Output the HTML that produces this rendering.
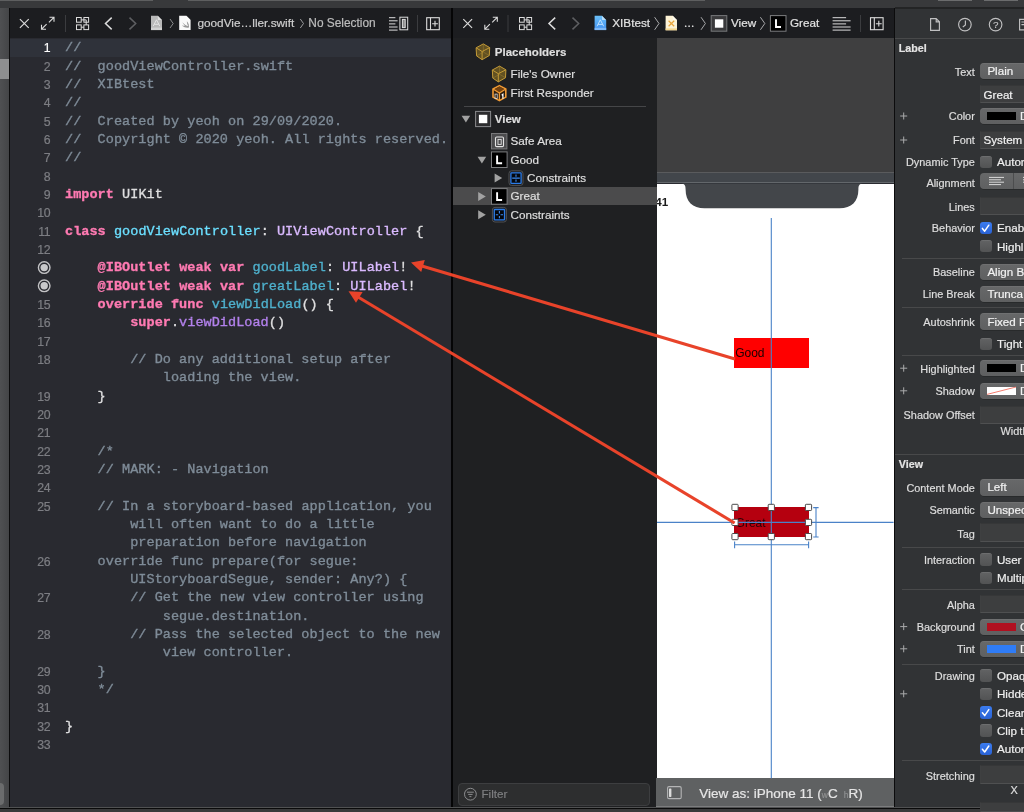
<!DOCTYPE html>
<html lang="en">
<head>
<meta charset="utf-8">
<title>XIBtest — goodViewController.swift</title>
<style>
html,body{margin:0;padding:0;background:#292a30;}
body{width:1024px;height:812px;overflow:hidden;position:relative;font-family:"Liberation Sans", sans-serif;}
#app{position:absolute;left:0;top:0;width:1024px;height:812px;overflow:hidden;background:#292a30;will-change:transform;}
#app div{position:absolute;box-sizing:border-box;}
.t{position:absolute;white-space:pre;-webkit-text-stroke:0.2px;}
svg.ov{position:absolute;left:0;top:0;width:1024px;height:812px;overflow:hidden;pointer-events:none;}
.m{font-family:"Liberation Mono", monospace;-webkit-text-stroke:0.35px;}
.k{color:#ff7ab2;font-weight:700;}
.c{color:#7f8c98;}
.d{color:#6bdfff;}
.o{color:#4eb0cc;}
.p{color:#dabaff;}
.f{color:#b281eb;}
</style>
</head>
<body>
<div id="app">
<div style="left:0px;top:0px;width:1024px;height:8px;background:#38393b;"></div>
<div style="left:0px;top:0px;width:153px;height:1px;background:#5e5f60;"></div>
<div style="left:188px;top:0px;width:516.5px;height:1px;background:#5e5f60;"></div>
<div style="left:938px;top:0px;width:34px;height:1px;background:#6b6c6d;"></div>
<div style="left:984px;top:0px;width:34px;height:1px;background:#6b6c6d;"></div>
<div style="left:0px;top:8px;width:9px;height:799px;background:linear-gradient(90deg,#4f5052,#444547);"></div>
<div style="left:0px;top:59px;width:9px;height:20px;background:#8e8f90;"></div>
<div style="left:-6px;top:782.5px;width:10px;height:22.5px;background:#6b6c6d;border-radius:4px;"></div>
<div style="left:9px;top:8px;width:1.2px;height:799px;background:#0c0c0d;"></div>
<div style="left:10px;top:8px;width:440.5px;height:30px;background:#1c1d20;"></div>
<div style="left:10px;top:38px;width:440.5px;height:769px;background:#292a30;"></div>
<div style="left:10px;top:38.5px;width:440.5px;height:18px;background:#2f323a;"></div>
<div style="left:450.5px;top:8px;width:2.5px;height:799px;background:#050506;"></div>
<div style="left:453px;top:8px;width:441px;height:30px;background:#1c1d20;"></div>
<div style="left:453px;top:38px;width:204px;height:769px;background:#1f2022;"></div>
<div style="left:657px;top:38px;width:237px;height:134px;background:#3f3f40;"></div>
<div style="left:657px;top:171.5px;width:237px;height:1px;background:#5a5b5d;"></div>
<div style="left:657px;top:172.5px;width:237px;height:10px;background:#42464b;"></div>
<div style="left:657px;top:182.3px;width:237px;height:1.2px;background:#63676b;"></div>
<div style="left:657px;top:183.5px;width:237px;height:595px;background:#ffffff;"></div>
<div style="left:656.4px;top:778.3px;width:237.6px;height:29px;background:#5f6162;"></div>
<div style="left:893.6px;top:8px;width:1.6px;height:799px;background:#0c0c0d;"></div>
<div style="left:895px;top:8px;width:129px;height:799px;background:#313335;"></div>
<div style="left:895px;top:38px;width:129px;height:1px;background:#48494a;"></div>
<div style="left:895px;top:7.4px;width:129px;height:1.2px;background:#232425;"></div>
<div style="left:0px;top:806.6px;width:1024px;height:1px;background:#505152;"></div>
<div style="left:0px;top:807.5px;width:1024px;height:1.7px;background:#0a0a0a;"></div>
<div style="left:0px;top:809.2px;width:1024px;height:3px;background:#3a3a3b;"></div>
<div style="left:656.4px;top:806.4px;width:237.6px;height:1.1px;background:#7c7d7e;"></div>
<span class="t" style="top:16px;font-size:11.8px;line-height:15px;color:#cfcfcf;left:197.4px;">goodVie…ller.swift</span>
<span class="t" style="top:16px;font-size:11.9px;line-height:15px;color:#bcbcbc;left:308.3px;">No Selection</span>
<span class="t" style="top:15px;font-size:11.7px;line-height:15px;color:#e2e2e2;left:612.3px;">XIBtest</span>
<span class="t" style="top:15px;font-size:11.7px;line-height:15px;color:#e2e2e2;letter-spacing:0.3px;left:684px;">...</span>
<span class="t" style="top:15px;font-size:11.7px;line-height:15px;color:#e2e2e2;left:731px;">View</span>
<span class="t" style="top:15px;font-size:11.7px;line-height:15px;color:#e2e2e2;left:790px;">Great</span>
<span class="t" style="top:40px;font-size:12.3px;line-height:16px;color:#ffffff;letter-spacing:-0.35px;right:973.7px;text-align:right;">1</span>
<span class="t m" style="top:39px;font-size:13.5px;line-height:18px;color:#dfdfe0;letter-spacing:0.05px;left:65.0px;"><span class="c">//</span></span>
<span class="t" style="top:59px;font-size:12.3px;line-height:16px;color:#7d7e83;letter-spacing:-0.35px;right:973.7px;text-align:right;">2</span>
<span class="t m" style="top:58px;font-size:13.5px;line-height:18px;color:#dfdfe0;letter-spacing:0.05px;left:65.0px;"><span class="c">//  goodViewController.swift</span></span>
<span class="t" style="top:77px;font-size:12.3px;line-height:16px;color:#7d7e83;letter-spacing:-0.35px;right:973.7px;text-align:right;">3</span>
<span class="t m" style="top:76px;font-size:13.5px;line-height:18px;color:#dfdfe0;letter-spacing:0.05px;left:65.0px;"><span class="c">//  XIBtest</span></span>
<span class="t" style="top:95px;font-size:12.3px;line-height:16px;color:#7d7e83;letter-spacing:-0.35px;right:973.7px;text-align:right;">4</span>
<span class="t m" style="top:94px;font-size:13.5px;line-height:18px;color:#dfdfe0;letter-spacing:0.05px;left:65.0px;"><span class="c">//</span></span>
<span class="t" style="top:114px;font-size:12.3px;line-height:16px;color:#7d7e83;letter-spacing:-0.35px;right:973.7px;text-align:right;">5</span>
<span class="t m" style="top:113px;font-size:13.5px;line-height:18px;color:#dfdfe0;letter-spacing:0.05px;left:65.0px;"><span class="c">//  Created by yeoh on 29/09/2020.</span></span>
<span class="t" style="top:132px;font-size:12.3px;line-height:16px;color:#7d7e83;letter-spacing:-0.35px;right:973.7px;text-align:right;">6</span>
<span class="t m" style="top:131px;font-size:13.5px;line-height:18px;color:#dfdfe0;letter-spacing:0.05px;left:65.0px;"><span class="c">//  Copyright © 2020 yeoh. All rights reserved.</span></span>
<span class="t" style="top:150px;font-size:12.3px;line-height:16px;color:#7d7e83;letter-spacing:-0.35px;right:973.7px;text-align:right;">7</span>
<span class="t m" style="top:149px;font-size:13.5px;line-height:18px;color:#dfdfe0;letter-spacing:0.05px;left:65.0px;"><span class="c">//</span></span>
<span class="t" style="top:169px;font-size:12.3px;line-height:16px;color:#7d7e83;letter-spacing:-0.35px;right:973.7px;text-align:right;">8</span>
<span class="t" style="top:187px;font-size:12.3px;line-height:16px;color:#7d7e83;letter-spacing:-0.35px;right:973.7px;text-align:right;">9</span>
<span class="t m" style="top:186px;font-size:13.5px;line-height:18px;color:#dfdfe0;letter-spacing:0.05px;left:65.0px;"><span class="k">import</span> UIKit</span>
<span class="t" style="top:205px;font-size:12.3px;line-height:16px;color:#7d7e83;letter-spacing:-0.35px;right:973.7px;text-align:right;">10</span>
<span class="t" style="top:224px;font-size:12.3px;line-height:16px;color:#7d7e83;letter-spacing:-0.35px;right:973.7px;text-align:right;">11</span>
<span class="t m" style="top:223px;font-size:13.5px;line-height:18px;color:#dfdfe0;letter-spacing:0.05px;left:65.0px;"><span class="k">class</span> <span class="d">goodViewController</span>: <span class="p">UIViewController</span> {</span>
<span class="t" style="top:242px;font-size:12.3px;line-height:16px;color:#7d7e83;letter-spacing:-0.35px;right:973.7px;text-align:right;">12</span>
<span class="t m" style="top:259px;font-size:13.5px;line-height:18px;color:#dfdfe0;letter-spacing:0.05px;left:97.6px;"><span class="k">@IBOutlet</span> <span class="k">weak</span> <span class="k">var</span> <span class="o">goodLabel</span>: <span class="p">UILabel</span>!</span>
<span class="t m" style="top:278px;font-size:13.5px;line-height:18px;color:#dfdfe0;letter-spacing:0.05px;left:97.6px;"><span class="k">@IBOutlet</span> <span class="k">weak</span> <span class="k">var</span> <span class="o">greatLabel</span>: <span class="p">UILabel</span>!</span>
<span class="t" style="top:297px;font-size:12.3px;line-height:16px;color:#7d7e83;letter-spacing:-0.35px;right:973.7px;text-align:right;">15</span>
<span class="t m" style="top:296px;font-size:13.5px;line-height:18px;color:#dfdfe0;letter-spacing:0.05px;left:97.6px;"><span class="k">override</span> <span class="k">func</span> <span class="o">viewDidLoad</span>() {</span>
<span class="t" style="top:315px;font-size:12.3px;line-height:16px;color:#7d7e83;letter-spacing:-0.35px;right:973.7px;text-align:right;">16</span>
<span class="t m" style="top:314px;font-size:13.5px;line-height:18px;color:#dfdfe0;letter-spacing:0.05px;left:130.2px;"><span class="k">super</span>.<span class="f">viewDidLoad</span>()</span>
<span class="t" style="top:334px;font-size:12.3px;line-height:16px;color:#7d7e83;letter-spacing:-0.35px;right:973.7px;text-align:right;">17</span>
<span class="t" style="top:352px;font-size:12.3px;line-height:16px;color:#7d7e83;letter-spacing:-0.35px;right:973.7px;text-align:right;">18</span>
<span class="t m" style="top:351px;font-size:13.5px;line-height:18px;color:#dfdfe0;letter-spacing:0.05px;left:130.2px;"><span class="c">// Do any additional setup after</span></span>
<span class="t m" style="top:369px;font-size:13.5px;line-height:18px;color:#dfdfe0;letter-spacing:0.05px;left:162.8px;"><span class="c">loading the view.</span></span>
<span class="t" style="top:389px;font-size:12.3px;line-height:16px;color:#7d7e83;letter-spacing:-0.35px;right:973.7px;text-align:right;">19</span>
<span class="t m" style="top:388px;font-size:13.5px;line-height:18px;color:#dfdfe0;letter-spacing:0.05px;left:97.6px;">}</span>
<span class="t" style="top:407px;font-size:12.3px;line-height:16px;color:#7d7e83;letter-spacing:-0.35px;right:973.7px;text-align:right;">20</span>
<span class="t" style="top:425px;font-size:12.3px;line-height:16px;color:#7d7e83;letter-spacing:-0.35px;right:973.7px;text-align:right;">21</span>
<span class="t" style="top:444px;font-size:12.3px;line-height:16px;color:#7d7e83;letter-spacing:-0.35px;right:973.7px;text-align:right;">22</span>
<span class="t m" style="top:443px;font-size:13.5px;line-height:18px;color:#dfdfe0;letter-spacing:0.05px;left:97.6px;"><span class="c">/*</span></span>
<span class="t" style="top:462px;font-size:12.3px;line-height:16px;color:#7d7e83;letter-spacing:-0.35px;right:973.7px;text-align:right;">23</span>
<span class="t m" style="top:461px;font-size:13.5px;line-height:18px;color:#dfdfe0;letter-spacing:0.05px;left:97.6px;"><span class="c">// MARK: - Navigation</span></span>
<span class="t" style="top:480px;font-size:12.3px;line-height:16px;color:#7d7e83;letter-spacing:-0.35px;right:973.7px;text-align:right;">24</span>
<span class="t" style="top:499px;font-size:12.3px;line-height:16px;color:#7d7e83;letter-spacing:-0.35px;right:973.7px;text-align:right;">25</span>
<span class="t m" style="top:498px;font-size:13.5px;line-height:18px;color:#dfdfe0;letter-spacing:0.05px;left:97.6px;"><span class="c">// In a storyboard-based application, you</span></span>
<span class="t m" style="top:516px;font-size:13.5px;line-height:18px;color:#dfdfe0;letter-spacing:0.05px;left:130.2px;"><span class="c">will often want to do a little</span></span>
<span class="t m" style="top:534px;font-size:13.5px;line-height:18px;color:#dfdfe0;letter-spacing:0.05px;left:130.2px;"><span class="c">preparation before navigation</span></span>
<span class="t" style="top:554px;font-size:12.3px;line-height:16px;color:#7d7e83;letter-spacing:-0.35px;right:973.7px;text-align:right;">26</span>
<span class="t m" style="top:553px;font-size:13.5px;line-height:18px;color:#dfdfe0;letter-spacing:0.05px;left:97.6px;"><span class="c">override func prepare(for segue:</span></span>
<span class="t m" style="top:571px;font-size:13.5px;line-height:18px;color:#dfdfe0;letter-spacing:0.05px;left:130.2px;"><span class="c">UIStoryboardSegue, sender: Any?) {</span></span>
<span class="t" style="top:590px;font-size:12.3px;line-height:16px;color:#7d7e83;letter-spacing:-0.35px;right:973.7px;text-align:right;">27</span>
<span class="t m" style="top:589px;font-size:13.5px;line-height:18px;color:#dfdfe0;letter-spacing:0.05px;left:130.2px;"><span class="c">// Get the new view controller using</span></span>
<span class="t m" style="top:608px;font-size:13.5px;line-height:18px;color:#dfdfe0;letter-spacing:0.05px;left:162.8px;"><span class="c">segue.destination.</span></span>
<span class="t" style="top:627px;font-size:12.3px;line-height:16px;color:#7d7e83;letter-spacing:-0.35px;right:973.7px;text-align:right;">28</span>
<span class="t m" style="top:626px;font-size:13.5px;line-height:18px;color:#dfdfe0;letter-spacing:0.05px;left:130.2px;"><span class="c">// Pass the selected object to the new</span></span>
<span class="t m" style="top:644px;font-size:13.5px;line-height:18px;color:#dfdfe0;letter-spacing:0.05px;left:162.8px;"><span class="c">view controller.</span></span>
<span class="t" style="top:664px;font-size:12.3px;line-height:16px;color:#7d7e83;letter-spacing:-0.35px;right:973.7px;text-align:right;">29</span>
<span class="t m" style="top:663px;font-size:13.5px;line-height:18px;color:#dfdfe0;letter-spacing:0.05px;left:97.6px;"><span class="c">}</span></span>
<span class="t" style="top:682px;font-size:12.3px;line-height:16px;color:#7d7e83;letter-spacing:-0.35px;right:973.7px;text-align:right;">30</span>
<span class="t m" style="top:681px;font-size:13.5px;line-height:18px;color:#dfdfe0;letter-spacing:0.05px;left:97.6px;"><span class="c">*/</span></span>
<span class="t" style="top:700px;font-size:12.3px;line-height:16px;color:#7d7e83;letter-spacing:-0.35px;right:973.7px;text-align:right;">31</span>
<span class="t" style="top:719px;font-size:12.3px;line-height:16px;color:#7d7e83;letter-spacing:-0.35px;right:973.7px;text-align:right;">32</span>
<span class="t m" style="top:718px;font-size:13.5px;line-height:18px;color:#dfdfe0;letter-spacing:0.05px;left:65.0px;">}</span>
<span class="t" style="top:737px;font-size:12.3px;line-height:16px;color:#7d7e83;letter-spacing:-0.35px;right:973.7px;text-align:right;">33</span>
<div style="left:453px;top:187.4px;width:204px;height:18.1px;background:#4b4b4c;"></div>
<div style="left:464px;top:106.2px;width:182px;height:1px;background:#454648;"></div>
<span class="t" style="top:45px;font-size:11.5px;line-height:15px;color:#dfdfdf;font-weight:700;left:494.8px;">Placeholders</span>
<span class="t" style="top:66px;font-size:11.7px;line-height:15px;color:#dfdfdf;left:510.5px;">File&#x27;s Owner</span>
<span class="t" style="top:85px;font-size:11.7px;line-height:15px;color:#dfdfdf;left:510.5px;">First Responder</span>
<span class="t" style="top:112px;font-size:11.5px;line-height:15px;color:#dfdfdf;font-weight:700;left:494.8px;">View</span>
<span class="t" style="top:133px;font-size:11.7px;line-height:15px;color:#dfdfdf;left:510.5px;">Safe Area</span>
<span class="t" style="top:152px;font-size:11.7px;line-height:15px;color:#dfdfdf;left:510.5px;">Good</span>
<span class="t" style="top:170px;font-size:11.7px;line-height:15px;color:#dfdfdf;left:527px;">Constraints</span>
<span class="t" style="top:188px;font-size:11.7px;line-height:15px;color:#dfdfdf;left:510.5px;">Great</span>
<span class="t" style="top:207px;font-size:11.7px;line-height:15px;color:#dfdfdf;left:510.5px;">Constraints</span>
<div style="left:458.3px;top:783px;width:192px;height:22.6px;background:#2d2e2f;border:1px solid #3d3e40;border-radius:4px;"></div>
<span class="t" style="top:786px;font-size:11.7px;line-height:15px;color:#7e7f81;left:481.4px;">Filter</span>
<span class="t" style="top:194px;font-size:11.6px;line-height:15px;color:#1a1a1a;font-weight:700;left:655.2px;clip-path:inset(0 0 0 1.8px);-webkit-text-stroke:0;">41</span>
<div style="left:734.2px;top:337.8px;width:74.8px;height:30px;background:#ff0000;"></div>
<span class="t" style="top:345px;font-size:12px;line-height:16px;color:#1c0000;left:735.2px;-webkit-text-stroke:0;">Good</span>
<div style="left:734.2px;top:506.8px;width:74.8px;height:30px;background:#b5000f;"></div>
<span class="t" style="top:515px;font-size:12px;line-height:16px;color:#2a0004;left:735.6px;-webkit-text-stroke:0;">Great</span>
<span class="t" style="top:785px;font-size:13.5px;line-height:18px;color:#e6e6e6;left:699.2px;">View as: iPhone 11 (<span style="font-size:8.5px;color:#8f9091">w</span>C <span style="font-size:8.5px;color:#8f9091"> h</span>R)</span>
<span class="t" style="top:18px;font-size:9.8px;line-height:13px;color:#c4c4c5;left:993.1px;">?</span>
<span class="t" style="top:41px;font-size:10.7px;line-height:14px;color:#e4e4e4;font-weight:700;left:898.8px;">Label</span>
<span class="t" style="top:65px;font-size:10.9px;line-height:14px;color:#dedede;right:49.2px;text-align:right;">Text</span>
<div style="left:980px;top:62.6px;width:60px;height:16.4px;background:linear-gradient(#676869,#5f6061);border-radius:4px;box-shadow:0 0.5px 0 rgba(0,0,0,.35), inset 0 0.5px 0 rgba(255,255,255,.12);"></div>
<span class="t" style="top:63px;font-size:11.6px;line-height:15px;color:#f2f2f2;left:987.4px;">Plain</span>
<div style="left:980px;top:85px;width:60px;height:18.2px;background:#3d3e3f;border-top:1px solid #363738;border-bottom:1px solid #4f5051;border-left:1px solid #3f4041;"></div>
<span class="t" style="top:87px;font-size:11.6px;line-height:15px;color:#f2f2f2;left:983.6px;">Great</span>
<span class="t" style="top:109px;font-size:10.9px;line-height:14px;color:#dedede;right:49.2px;text-align:right;">Color</span>
<div style="left:980px;top:107.8px;width:60px;height:16.2px;background:linear-gradient(#676869,#5f6061);border-radius:4px;box-shadow:0 0.5px 0 rgba(0,0,0,.35), inset 0 0.5px 0 rgba(255,255,255,.12);"></div>
<div style="left:986.8px;top:111.8px;width:29.4px;height:8.0px;background:#000000;"></div>
<span class="t" style="top:108px;font-size:11.6px;line-height:15px;color:#f2f2f2;left:1020px;">D</span>
<span class="t" style="top:133px;font-size:10.9px;line-height:14px;color:#dedede;right:49.2px;text-align:right;">Font</span>
<div style="left:980px;top:130.6px;width:60px;height:18.4px;background:#3d3e3f;border-top:1px solid #363738;border-bottom:1px solid #4f5051;border-left:1px solid #3f4041;"></div>
<span class="t" style="top:132px;font-size:11.6px;line-height:15px;color:#f2f2f2;left:983.6px;">System</span>
<span class="t" style="top:155px;font-size:10.9px;line-height:14px;color:#dedede;right:49.2px;text-align:right;">Dynamic Type</span>
<div style="left:979.5px;top:155.7px;width:12px;height:12.3px;background:linear-gradient(#626364,#525354);border-radius:3px;box-shadow:inset 0 0.5px 0 rgba(255,255,255,.15);"></div>
<span class="t" style="top:154px;font-size:11.6px;line-height:15px;color:#efefef;left:997px;">Autor</span>
<span class="t" style="top:176px;font-size:10.9px;line-height:14px;color:#dedede;right:49.2px;text-align:right;">Alignment</span>
<div style="left:980px;top:173.4px;width:60px;height:15.6px;background:linear-gradient(#676869,#5f6061);border-radius:4px;box-shadow:0 0.5px 0 rgba(0,0,0,.35);"></div>
<div style="left:1013.2px;top:173.4px;width:1px;height:15.6px;background:#4c4d4e;"></div>
<span class="t" style="top:200px;font-size:10.9px;line-height:14px;color:#dedede;right:49.2px;text-align:right;">Lines</span>
<div style="left:980px;top:197.2px;width:60px;height:18px;background:#3d3e3f;border-top:1px solid #363738;border-bottom:1px solid #4f5051;border-left:1px solid #3f4041;"></div>
<span class="t" style="top:221px;font-size:10.9px;line-height:14px;color:#dedede;right:49.2px;text-align:right;">Behavior</span>
<div style="left:979.5px;top:222px;width:12px;height:12.3px;background:linear-gradient(#3b7cf0,#2a62d4);border-radius:3px;"></div>
<span class="t" style="top:220px;font-size:11.6px;line-height:15px;color:#efefef;left:997px;">Enabl</span>
<div style="left:979.5px;top:240.1px;width:12px;height:12.3px;background:linear-gradient(#626364,#525354);border-radius:3px;box-shadow:inset 0 0.5px 0 rgba(255,255,255,.15);"></div>
<span class="t" style="top:239px;font-size:11.6px;line-height:15px;color:#efefef;left:997px;">Highl</span>
<div style="left:902px;top:257.8px;width:122px;height:1px;background:#48494a;"></div>
<span class="t" style="top:265px;font-size:10.9px;line-height:14px;color:#dedede;right:49.2px;text-align:right;">Baseline</span>
<div style="left:980px;top:263.6px;width:60px;height:16.4px;background:linear-gradient(#676869,#5f6061);border-radius:4px;box-shadow:0 0.5px 0 rgba(0,0,0,.35), inset 0 0.5px 0 rgba(255,255,255,.12);"></div>
<span class="t" style="top:264px;font-size:11.6px;line-height:15px;color:#f2f2f2;left:987.4px;">Align B</span>
<span class="t" style="top:287px;font-size:10.9px;line-height:14px;color:#dedede;right:49.2px;text-align:right;">Line Break</span>
<div style="left:980px;top:286px;width:60px;height:16px;background:linear-gradient(#676869,#5f6061);border-radius:4px;box-shadow:0 0.5px 0 rgba(0,0,0,.35), inset 0 0.5px 0 rgba(255,255,255,.12);"></div>
<span class="t" style="top:286px;font-size:11.6px;line-height:15px;color:#f2f2f2;left:987.4px;">Trunca</span>
<div style="left:902px;top:307.4px;width:122px;height:1px;background:#48494a;"></div>
<span class="t" style="top:315px;font-size:10.9px;line-height:14px;color:#dedede;right:49.2px;text-align:right;">Autoshrink</span>
<div style="left:980px;top:313.2px;width:60px;height:16.4px;background:linear-gradient(#676869,#5f6061);border-radius:4px;box-shadow:0 0.5px 0 rgba(0,0,0,.35), inset 0 0.5px 0 rgba(255,255,255,.12);"></div>
<span class="t" style="top:314px;font-size:11.6px;line-height:15px;color:#f2f2f2;left:987.4px;">Fixed F</span>
<div style="left:979.5px;top:338px;width:12px;height:12.3px;background:linear-gradient(#626364,#525354);border-radius:3px;box-shadow:inset 0 0.5px 0 rgba(255,255,255,.15);"></div>
<span class="t" style="top:336px;font-size:11.6px;line-height:15px;color:#efefef;left:997px;">Tight</span>
<div style="left:902px;top:355.2px;width:122px;height:1px;background:#48494a;"></div>
<span class="t" style="top:362px;font-size:10.9px;line-height:14px;color:#dedede;right:49.2px;text-align:right;">Highlighted</span>
<div style="left:980px;top:360.2px;width:60px;height:16px;background:linear-gradient(#676869,#5f6061);border-radius:4px;box-shadow:0 0.5px 0 rgba(0,0,0,.35), inset 0 0.5px 0 rgba(255,255,255,.12);"></div>
<div style="left:986.8px;top:364.2px;width:29.4px;height:7.800000000000001px;background:#000000;"></div>
<span class="t" style="top:360px;font-size:11.6px;line-height:15px;color:#f2f2f2;left:1020px;">D</span>
<span class="t" style="top:384px;font-size:10.9px;line-height:14px;color:#dedede;right:49.2px;text-align:right;">Shadow</span>
<div style="left:980px;top:382.8px;width:60px;height:16.2px;background:linear-gradient(#676869,#5f6061);border-radius:4px;box-shadow:0 0.5px 0 rgba(0,0,0,.35), inset 0 0.5px 0 rgba(255,255,255,.12);"></div>
<div style="left:986.8px;top:386.8px;width:29.4px;height:8.0px;background:#ffffff;"></div>
<span class="t" style="top:383px;font-size:11.6px;line-height:15px;color:#f2f2f2;left:1020px;">D</span>
<span class="t" style="top:408px;font-size:10.9px;line-height:14px;color:#dedede;right:49.2px;text-align:right;">Shadow Offset</span>
<div style="left:980px;top:405.6px;width:60px;height:18.4px;background:#3d3e3f;border-top:1px solid #363738;border-bottom:1px solid #4f5051;border-left:1px solid #3f4041;"></div>
<span class="t" style="top:424px;font-size:10.9px;line-height:14px;color:#dedede;left:1000.6px;">Width</span>
<div style="left:895px;top:453.8px;width:129px;height:1px;background:#48494a;"></div>
<span class="t" style="top:457px;font-size:10.7px;line-height:14px;color:#e4e4e4;font-weight:700;left:898.8px;">View</span>
<span class="t" style="top:481px;font-size:10.9px;line-height:14px;color:#dedede;right:49.2px;text-align:right;">Content Mode</span>
<div style="left:980px;top:479px;width:60px;height:16.5px;background:linear-gradient(#676869,#5f6061);border-radius:4px;box-shadow:0 0.5px 0 rgba(0,0,0,.35), inset 0 0.5px 0 rgba(255,255,255,.12);"></div>
<span class="t" style="top:479px;font-size:11.6px;line-height:15px;color:#f2f2f2;left:987.4px;">Left</span>
<span class="t" style="top:503px;font-size:10.9px;line-height:14px;color:#dedede;right:49.2px;text-align:right;">Semantic</span>
<div style="left:980px;top:501.6px;width:60px;height:16.4px;background:linear-gradient(#676869,#5f6061);border-radius:4px;box-shadow:0 0.5px 0 rgba(0,0,0,.35), inset 0 0.5px 0 rgba(255,255,255,.12);"></div>
<span class="t" style="top:502px;font-size:11.6px;line-height:15px;color:#f2f2f2;left:987.4px;">Unspec</span>
<span class="t" style="top:527px;font-size:10.9px;line-height:14px;color:#dedede;right:49.2px;text-align:right;">Tag</span>
<div style="left:980px;top:522.8px;width:60px;height:19px;background:#3d3e3f;border-top:1px solid #363738;border-bottom:1px solid #4f5051;border-left:1px solid #3f4041;"></div>
<div style="left:902px;top:547.2px;width:122px;height:1px;background:#48494a;"></div>
<span class="t" style="top:553px;font-size:10.9px;line-height:14px;color:#dedede;right:49.2px;text-align:right;">Interaction</span>
<div style="left:979.5px;top:553.4px;width:12px;height:12.3px;background:linear-gradient(#626364,#525354);border-radius:3px;box-shadow:inset 0 0.5px 0 rgba(255,255,255,.15);"></div>
<span class="t" style="top:552px;font-size:11.6px;line-height:15px;color:#efefef;left:997px;">User</span>
<div style="left:979.5px;top:572px;width:12px;height:12.3px;background:linear-gradient(#626364,#525354);border-radius:3px;box-shadow:inset 0 0.5px 0 rgba(255,255,255,.15);"></div>
<span class="t" style="top:570px;font-size:11.6px;line-height:15px;color:#efefef;left:997px;">Multip</span>
<div style="left:902px;top:589.4px;width:122px;height:1px;background:#48494a;"></div>
<span class="t" style="top:598px;font-size:10.9px;line-height:14px;color:#dedede;right:49.2px;text-align:right;">Alpha</span>
<div style="left:980px;top:594.8px;width:60px;height:18.2px;background:#3d3e3f;border-top:1px solid #363738;border-bottom:1px solid #4f5051;border-left:1px solid #3f4041;"></div>
<span class="t" style="top:620px;font-size:10.9px;line-height:14px;color:#dedede;right:49.2px;text-align:right;">Background</span>
<div style="left:980px;top:619px;width:60px;height:16px;background:linear-gradient(#676869,#5f6061);border-radius:4px;box-shadow:0 0.5px 0 rgba(0,0,0,.35), inset 0 0.5px 0 rgba(255,255,255,.12);"></div>
<div style="left:986.8px;top:623px;width:29.4px;height:7.800000000000001px;background:#b01020;"></div>
<span class="t" style="top:619px;font-size:11.6px;line-height:15px;color:#f2f2f2;left:1020px;">C</span>
<span class="t" style="top:642px;font-size:10.9px;line-height:14px;color:#dedede;right:49.2px;text-align:right;">Tint</span>
<div style="left:980px;top:641.2px;width:60px;height:15.8px;background:linear-gradient(#676869,#5f6061);border-radius:4px;box-shadow:0 0.5px 0 rgba(0,0,0,.35), inset 0 0.5px 0 rgba(255,255,255,.12);"></div>
<div style="left:986.8px;top:645.2px;width:29.4px;height:7.600000000000001px;background:#2f7cf6;"></div>
<span class="t" style="top:641px;font-size:11.6px;line-height:15px;color:#f2f2f2;left:1020px;">D</span>
<div style="left:902px;top:663.6px;width:122px;height:1px;background:#48494a;"></div>
<span class="t" style="top:669px;font-size:10.9px;line-height:14px;color:#dedede;right:49.2px;text-align:right;">Drawing</span>
<div style="left:979.5px;top:669.4px;width:12px;height:12.3px;background:linear-gradient(#626364,#525354);border-radius:3px;box-shadow:inset 0 0.5px 0 rgba(255,255,255,.15);"></div>
<span class="t" style="top:668px;font-size:11.6px;line-height:15px;color:#efefef;left:997px;">Opaq</span>
<div style="left:979.5px;top:688px;width:12px;height:12.3px;background:linear-gradient(#626364,#525354);border-radius:3px;box-shadow:inset 0 0.5px 0 rgba(255,255,255,.15);"></div>
<span class="t" style="top:686px;font-size:11.6px;line-height:15px;color:#efefef;left:997px;">Hidde</span>
<div style="left:979.5px;top:706.4px;width:12px;height:12.3px;background:linear-gradient(#3b7cf0,#2a62d4);border-radius:3px;"></div>
<span class="t" style="top:705px;font-size:11.6px;line-height:15px;color:#efefef;left:997px;">Clear</span>
<div style="left:979.5px;top:724.4px;width:12px;height:12.3px;background:linear-gradient(#626364,#525354);border-radius:3px;box-shadow:inset 0 0.5px 0 rgba(255,255,255,.15);"></div>
<span class="t" style="top:723px;font-size:11.6px;line-height:15px;color:#efefef;left:997px;">Clip t</span>
<div style="left:979.5px;top:742.8px;width:12px;height:12.3px;background:linear-gradient(#3b7cf0,#2a62d4);border-radius:3px;"></div>
<span class="t" style="top:741px;font-size:11.6px;line-height:15px;color:#efefef;left:997px;">Autor</span>
<div style="left:902px;top:760.2px;width:122px;height:1px;background:#48494a;"></div>
<span class="t" style="top:769px;font-size:10.9px;line-height:14px;color:#dedede;right:49.2px;text-align:right;">Stretching</span>
<div style="left:980px;top:765.4px;width:60px;height:18.4px;background:#3d3e3f;border-top:1px solid #363738;border-bottom:1px solid #4f5051;border-left:1px solid #3f4041;"></div>
<span class="t" style="top:783px;font-size:10.9px;line-height:14px;color:#dedede;left:1010.4px;">X</span>
<div style="left:980px;top:802px;width:60px;height:10px;background:#3d3e3f;border-top:1px solid #363738;border-bottom:1px solid #4f5051;border-left:1px solid #3f4041;"></div>
<svg class="ov" viewBox="0 0 1024 812" width="1024" height="812">
<path d="M19.9 19.1L28.700000000000003 27.9M28.700000000000003 19.1L19.9 27.9" stroke="#dcdcdc" stroke-width="1.15" fill="none"/>
<g stroke="#dcdcdc" stroke-width="1.1" fill="none"><path d="M41.6 29.2L46.6 24.200000000000003M41.5 24.8V29.3H46"/><path d="M53.9 17.400000000000002L48.9 22.4M49.5 17.3H54.0V21.8"/></g>
<path d="M65.5 15V32" stroke="#3b3c3f" stroke-width="1"/>
<g stroke="#dcdcdc" stroke-width="1" fill="none"><rect x="76.5" y="17.5" width="4.7" height="4.7"/><rect x="83.9" y="17.5" width="4.7" height="4.7"/><rect x="76.5" y="24.9" width="4.7" height="4.7"/><rect x="83.9" y="24.9" width="4.7" height="4.7"/><path d="M81.2 19.9H86.2V24.9M81.2 27.2H83.9"/></g>
<path d="M111.7 17.6L105.5 23.5L111.7 29.400000000000002" stroke="#dcdcdc" stroke-width="1.5" fill="none"/>
<path d="M129.5 17.6L135.7 23.5L129.5 29.400000000000002" stroke="#5e5f62" stroke-width="1.5" fill="none"/>
<path d="M151 15.7H157.8L162 19.9V30.1H151Z" fill="#b9b9b9" opacity="1"/>
<path d="M157.8 15.7L162 19.9H157.8Z" fill="#ffffff" opacity="0.55"/>
<path d="M153.2 26.2L156.5 19.8L159.8 26.2M154.3 24.3H158.7" stroke="#e4e4e4" stroke-width="1" fill="none"/>
<rect x="151" y="27.6" width="11" height="2.5" fill="#d2d2d2"/>
<path d="M170 19L173.2 23.5L170 28" stroke="#8a8b8d" stroke-width="1" fill="none"/>
<path d="M179.2 15.7H186.4L190.6 19.9V30.1H179.2Z" fill="#fafafa" opacity="1"/>
<path d="M186.4 15.7L190.6 19.9H186.4Z" fill="#ffffff" opacity="0.55"/>
<path d="M182.3 22.2C184.5 24.6 186.4 25.6 188.4 26.1C187.2 24.4 186.8 22.8 186.9 21.2C188.6 23 189.4 25.2 188.9 27.6C187 28.3 184.2 27.6 181.9 25.6C183.2 25.8 184.1 25.7 184.9 25.4C183.8 24.5 182.9 23.4 182.3 22.2Z" fill="#9a9a9a"/>
<path d="M300.3 19L303.5 23.5L300.3 28" stroke="#9a9b9d" stroke-width="1" fill="none"/>
<path d="M389 17.7H395.4M389 20.8H397.6M389 23.9H395.4M389 27.0H397.6M389 30.1H397.6" stroke="#dcdcdc" stroke-width="1"/>
<g stroke="#dcdcdc" stroke-width="1" fill="none"><rect x="399.9" y="17.2" width="7.8" height="12.6"/><rect x="402.4" y="19.4" width="2.8" height="8.2" fill="#8a8a8a"/></g>
<path d="M417.5 15V32" stroke="#3b3c3f" stroke-width="1"/>
<g stroke="#dcdcdc" stroke-width="1.1" fill="none"><rect x="426.7" y="17.7" width="12.6" height="12"/><path d="M430.5 17.7V29.7M432.09999999999997 23.7H437.9M435.0 20.8V26.6"/></g>
<path d="M463.3 19.1L472.09999999999997 27.9M472.09999999999997 19.1L463.3 27.9" stroke="#dcdcdc" stroke-width="1.15" fill="none"/>
<g stroke="#dcdcdc" stroke-width="1.1" fill="none"><path d="M484.90000000000003 29.2L489.90000000000003 24.200000000000003M484.8 24.8V29.3H489.3"/><path d="M497.2 17.400000000000002L492.2 22.4M492.8 17.3H497.3V21.8"/></g>
<path d="M508 15V32" stroke="#3b3c3f" stroke-width="1"/>
<g stroke="#dcdcdc" stroke-width="1" fill="none"><rect x="519.5" y="17.5" width="4.7" height="4.7"/><rect x="526.9" y="17.5" width="4.7" height="4.7"/><rect x="519.5" y="24.9" width="4.7" height="4.7"/><rect x="526.9" y="24.9" width="4.7" height="4.7"/><path d="M524.2 19.9H529.2V24.9M524.2 27.2H526.9"/></g>
<path d="M555.2 17.6L549 23.5L555.2 29.400000000000002" stroke="#dcdcdc" stroke-width="1.5" fill="none"/>
<path d="M572.5 17.6L578.7 23.5L572.5 29.400000000000002" stroke="#5e5f62" stroke-width="1.5" fill="none"/>
<defs><linearGradient id="gb" x1="0" y1="0" x2="0" y2="1"><stop offset="0" stop-color="#6cc0f8"/><stop offset="1" stop-color="#3f8ff0"/></linearGradient></defs>
<path d="M594.6 15.7H602.0L606.2 19.9V30.1H594.6Z" fill="url(#gb)" opacity="1"/>
<path d="M602.0 15.7L606.2 19.9H602.0Z" fill="#ffffff" opacity="0.55"/>
<path d="M597 26.3L600.3 19.8L603.7 26.3M598.2 24.4H602.5" stroke="#d6ecff" stroke-width="1" fill="none" opacity="0.8"/>
<rect x="594.6" y="27.8" width="11.6" height="2.3" fill="#7fb9f7"/>
<path d="M654.6 17.2L659.0 23.5L654.6 29.799999999999997" stroke="#a8a9ab" stroke-width="1" fill="none"/>
<path d="M665.6 15.7H672.8L677.0 19.9V30.299999999999997H665.6Z" fill="#fdf3d6" opacity="1"/>
<path d="M672.8 15.7L677.0 19.9H672.8Z" fill="#ffffff" opacity="0.55"/>
<path d="M668.6 20.8L674.2 26.2M674.2 20.8L668.6 26.2" stroke="#eaa63a" stroke-width="1.2" fill="none"/>
<rect x="665.6" y="28.4" width="11.4" height="1.9" fill="#f5d78e"/>
<path d="M701 17.2L705.4 23.5L701 29.799999999999997" stroke="#a8a9ab" stroke-width="1" fill="none"/>
<rect x="711.2" y="15.6" width="15.6" height="15.6" fill="#3a3a3c" stroke="#77787a" stroke-width="1"/>
<rect x="714.9" y="19.3" width="8.4" height="8.4" fill="#ffffff"/>
<path d="M760.4 17.2L764.8 23.5L760.4 29.799999999999997" stroke="#a8a9ab" stroke-width="1" fill="none"/>
<rect x="770.4" y="15.6" width="15.6" height="15.6" fill="#000000" stroke="#7d7e80" stroke-width="1"/>
<path d="M776.0 19.2V27.0H781.0" stroke="#ffffff" stroke-width="1.9" fill="none"/>
<path d="M832.6 17.7H846.1M832.6 20.8H850.6M832.6 23.9H846.1M832.6 27.0H850.6M832.6 30.1H850.6" stroke="#dcdcdc" stroke-width="1"/>
<path d="M860.5 15V32" stroke="#3b3c3f" stroke-width="1"/>
<g stroke="#dcdcdc" stroke-width="1.1" fill="none"><rect x="870.5" y="17.7" width="12.6" height="12"/><path d="M874.3 17.7V29.7M875.9 23.7H881.7M878.8 20.8V26.6"/></g>
<circle cx="44.2" cy="267.6" r="5.8" fill="none" stroke="#c2c2c4" stroke-width="1.4"/>
<circle cx="44.2" cy="267.6" r="3.7" fill="#c8c8ca"/>
<circle cx="44.2" cy="285.8" r="5.8" fill="none" stroke="#c2c2c4" stroke-width="1.4"/>
<circle cx="44.2" cy="285.8" r="3.7" fill="#c8c8ca"/>
<path d="M483.3 43.9L489.7 47.6L489.3 55.5L482.1 59.7L476.6 55.9L476.1 47.8Z" fill="#6f5a22" fill-opacity="0.85" stroke="#c39a37" stroke-width="1" stroke-linejoin="round"/>
<path d="M476.1 47.8L482.1 51.5L489.7 47.6M482.1 51.5L482.1 59.7" fill="none" stroke="#c39a37" stroke-width="1"/>
<path d="M483.3 43.9L483.4 52.1M476.6 55.9L483.4 52.1L489.3 55.5" fill="none" stroke="#c39a37" stroke-width="0.6" opacity="0.55"/>
<path d="M499.5 66.1L505.9 69.8L505.5 77.7L498.3 81.9L492.8 78.1L492.3 70.0Z" fill="#6f5a22" fill-opacity="0.85" stroke="#c39a37" stroke-width="1" stroke-linejoin="round"/>
<path d="M492.3 70.0L498.3 73.7L505.9 69.8M498.3 73.7L498.3 81.9" fill="none" stroke="#c39a37" stroke-width="1"/>
<path d="M499.5 66.1L499.6 74.3M492.8 78.1L499.6 74.3L505.5 77.7" fill="none" stroke="#c39a37" stroke-width="0.6" opacity="0.55"/>
<path d="M499.4 85.6L505.79999999999995 89.05V97.15L499.4 100.60000000000001L493.0 97.15V89.05Z" fill="#2a1c0e" stroke="#f09a34" stroke-width="1.6" stroke-linejoin="round"/>
<path d="M499.4 86.6L504.59999999999997 89.35L499.4 92.69999999999999L494.2 89.35Z" fill="#74420f"/>
<path d="M493.0 89.05L499.4 93.1L505.79999999999995 89.05M499.4 93.1V100.60000000000001" fill="none" stroke="#f09a34" stroke-width="1.3"/>
<rect x="495.0" y="94.1" width="2.2" height="4.4" fill="none" stroke="#d8d8d8" stroke-width="0.8"/>
<path d="M501.7 95.3L502.9 94.3V98.69999999999999" fill="none" stroke="#ffffff" stroke-width="1.2"/>
<path d="M461.6 115.8H470.20000000000005L465.90000000000003 122.6Z" fill="#a2a2a2"/>
<rect x="475.6" y="111.4" width="15" height="15.2" fill="#2c2c2e" stroke="#8a8b8d" stroke-width="1"/>
<rect x="478.9" y="114.8" width="8.4" height="8.4" fill="#ffffff"/>
<rect x="491.5" y="133.5" width="15.4" height="15.4" fill="#4c4c4e" stroke="#78787a" stroke-width="1"/>
<rect x="495.5" y="137" width="8" height="9.6" rx="1.2" fill="none" stroke="#e4e4e4" stroke-width="1.1"/>
<rect x="498" y="139.4" width="3.2" height="5" fill="none" stroke="#e4e4e4" stroke-width="0.9"/>
<path d="M477.6 156.8H486.20000000000005L481.90000000000003 163.60000000000002Z" fill="#a2a2a2"/>
<rect x="491.5" y="151.9" width="15.6" height="15.6" fill="#000000" stroke="#7d7e80" stroke-width="1"/>
<path d="M497.1 155.5V163.3H502.1" stroke="#ffffff" stroke-width="1.9" fill="none"/>
<path d="M494.6 173.6L502.20000000000005 178.1L494.6 182.6Z" fill="#a2a2a2"/>
<rect x="509" y="170.8" width="14" height="14.6" rx="2.6" fill="#1a1a1c" stroke="#505153" stroke-width="1"/>
<rect x="510.9" y="172.9" width="10.2" height="10.4" rx="0.6" fill="#05070c" stroke="#2b7be6" stroke-width="1.3"/>
<path d="M516 174.50000000000003V176.70000000000002M516 179.50000000000003V181.70000000000002M512.2 178.10000000000002H519.8" stroke="#3b8af0" stroke-width="1.1" fill="none"/>
<path d="M478.2 192L485.8 196.5L478.2 201Z" fill="#a2a2a2"/>
<rect x="491.5" y="188.6" width="15.6" height="15.6" fill="#000000" stroke="#7d7e80" stroke-width="1"/>
<path d="M497.1 192.2V200.0H502.1" stroke="#ffffff" stroke-width="1.9" fill="none"/>
<path d="M478.2 210.2L485.8 214.7L478.2 219.2Z" fill="#a2a2a2"/>
<rect x="492.4" y="207.4" width="14" height="14.6" rx="2.6" fill="#1a1a1c" stroke="#505153" stroke-width="1"/>
<rect x="494.29999999999995" y="209.5" width="10.2" height="10.4" rx="0.6" fill="#05070c" stroke="#2b7be6" stroke-width="1.3"/>
<path d="M499.4 211.10000000000002V213.50000000000003M499.4 215.9V218.3M495.79999999999995 214.70000000000002H498.2M500.59999999999997 214.70000000000002H503.0" stroke="#3b8af0" stroke-width="1.1" fill="none"/>
<circle cx="470.4" cy="794.2" r="5.9" fill="none" stroke="#8c8d8f" stroke-width="1"/>
<path d="M467 792.2H473.8M468.2 794.4H472.6M469.4 796.6H471.4" stroke="#8c8d8f" stroke-width="1" fill="none"/>
<path d="M681 183.5H863C859 183.6 858.4 186 858.4 189.5C858.4 201.5 851.5 208.3 839.5 208.3H704.5C692.5 208.3 685.6 201.5 685.6 189.5C685.6 186 685 183.6 681 183.5Z" fill="#43464a"/>
<path d="M771.3 218V778.3" stroke="#4a82c8" stroke-width="1.1" fill="none"/>
<path d="M657 522.4H893.6" stroke="#4a82c8" stroke-width="1.1" fill="none"/>
<path d="M816 507.6V537M813.2 507.6H818.6M813.2 537H818.6" stroke="#4a82c8" stroke-width="1.1" fill="none"/>
<path d="M734.6 544.8H808.6M734.6 541.4V548.2M808.6 541.4V548.2" stroke="#4a82c8" stroke-width="1.1" fill="none"/>
<rect x="731.9" y="504.29999999999995" width="6.2" height="6.2" fill="#ffffff" stroke="#4a4a4a" stroke-width="1" rx="0.8"/>
<rect x="731.9" y="519.3" width="6.2" height="6.2" fill="#ffffff" stroke="#4a4a4a" stroke-width="1" rx="0.8"/>
<rect x="731.9" y="533.5" width="6.2" height="6.2" fill="#ffffff" stroke="#4a4a4a" stroke-width="1" rx="0.8"/>
<rect x="768.1999999999999" y="504.29999999999995" width="6.2" height="6.2" fill="#ffffff" stroke="#4a4a4a" stroke-width="1" rx="0.8"/>
<rect x="768.1999999999999" y="533.5" width="6.2" height="6.2" fill="#ffffff" stroke="#4a4a4a" stroke-width="1" rx="0.8"/>
<rect x="805.4" y="504.29999999999995" width="6.2" height="6.2" fill="#ffffff" stroke="#4a4a4a" stroke-width="1" rx="0.8"/>
<rect x="805.4" y="519.3" width="6.2" height="6.2" fill="#ffffff" stroke="#4a4a4a" stroke-width="1" rx="0.8"/>
<rect x="805.4" y="533.5" width="6.2" height="6.2" fill="#ffffff" stroke="#4a4a4a" stroke-width="1" rx="0.8"/>
<rect x="667.6" y="786.6" width="13.6" height="12" rx="1.4" fill="none" stroke="#b4b5b6" stroke-width="1.1"/>
<rect x="669" y="788.5" width="2.4" height="8.4" rx="0.6" fill="#dcdcdc"/>
<path d="M930.6 18.6H936.2L939.4 21.8V30.4H930.6Z M936.2 18.6V21.8H939.4" fill="none" stroke="#c0c0c1" stroke-width="1.15"/>
<circle cx="964.9" cy="24.6" r="6.3" fill="none" stroke="#c0c0c1" stroke-width="1.15"/>
<path d="M965.4 20.4V25L962.8 27" fill="none" stroke="#c0c0c1" stroke-width="1.15"/>
<circle cx="995.6" cy="24.6" r="6.3" fill="none" stroke="#c0c0c1" stroke-width="1.15"/>
<path d="M1024 19.4H1019.6V29.8H1024M1021.4 22H1024M1021.4 24.6H1024" fill="none" stroke="#c0c0c1" stroke-width="1.15"/>
<path d="M900.2 116H907.2M903.7 112.5V119.5" stroke="#a9aaab" stroke-width="1" fill="none"/>
<path d="M900.2 140H907.2M903.7 136.5V143.5" stroke="#a9aaab" stroke-width="1" fill="none"/>
<path d="M989 177.4H1004M989 179.8H1001M989 182.2H1004M989 184.6H1001" stroke="#e8e8e8" stroke-width="0.9" fill="none"/>
<path d="M1023 177.4H1030M1023 179.8H1030M1023 182.2H1030" stroke="#e8e8e8" stroke-width="0.9" fill="none"/>
<path d="M982.4 228.4L984.7 231.2L988.8 225.2" stroke="#ffffff" stroke-width="1.5" fill="none" stroke-linecap="round" stroke-linejoin="round"/>
<path d="M900.2 368.2H907.2M903.7 364.7V371.7" stroke="#a9aaab" stroke-width="1" fill="none"/>
<path d="M900.2 390.8H907.2M903.7 387.3V394.3" stroke="#a9aaab" stroke-width="1" fill="none"/>
<path d="M987 394.4L1016 387" stroke="#f05a4a" stroke-width="0.8" fill="none"/>
<path d="M900.2 626.6H907.2M903.7 623.1V630.1" stroke="#a9aaab" stroke-width="1" fill="none"/>
<path d="M900.2 648.8H907.2M903.7 645.3V652.3" stroke="#a9aaab" stroke-width="1" fill="none"/>
<path d="M900.2 693.8H907.2M903.7 690.3V697.3" stroke="#a9aaab" stroke-width="1" fill="none"/>
<path d="M982.4 712.8L984.7 715.6L988.8 709.6" stroke="#ffffff" stroke-width="1.5" fill="none" stroke-linecap="round" stroke-linejoin="round"/>
<path d="M982.4 749.1999999999999L984.7 752.0L988.8 746.0" stroke="#ffffff" stroke-width="1.5" fill="none" stroke-linecap="round" stroke-linejoin="round"/>
</svg>
<svg class="ov" viewBox="0 0 1024 812" width="1024" height="812">
<path d="M735 359L421 265.8" stroke="#e8432a" stroke-width="3.1" fill="none"/>
<path d="M411 262.6L424.8 260.1L421.2 272Z" fill="#e8432a"/>
<path d="M734.6 523L358 297" stroke="#e8432a" stroke-width="3.1" fill="none"/>
<path d="M348.5 291.2L362.6 292.1L356 302.8Z" fill="#e8432a"/>
</svg>
</div>
</body>
</html>
